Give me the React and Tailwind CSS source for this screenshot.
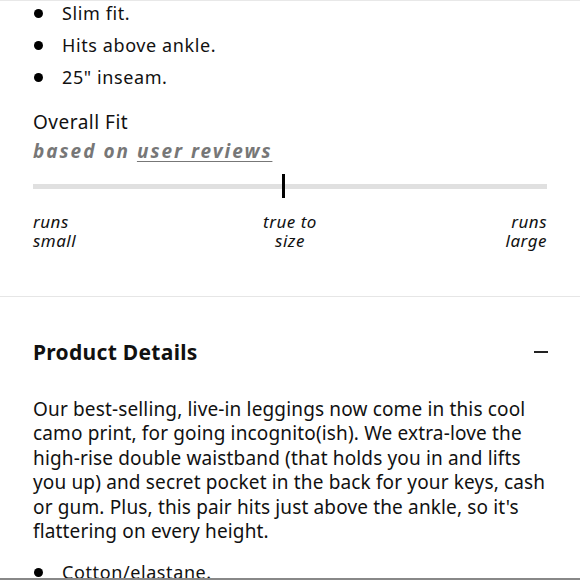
export default function App() {
  const font = { fontFamily: "'Noto Sans', 'Open Sans', sans-serif" };
  return (
    <div className="w-[580px] h-[580px] overflow-hidden bg-white text-[#111] border-t border-[#e8e8e8] relative" style={font}>
      <div className="px-[33px]">
        <ul className="-mt-[4px] text-[18px] leading-[32px] tracking-[0.6px]">
          {["Slim fit.", "Hits above ankle.", "25\" inseam."].map((t) => (
            <li key={t} className="flex items-center">
              <span className="w-[9px] h-[9px] rounded-full bg-black ml-[1px] mr-[19px]" />
              <span>{t}</span>
            </li>
          ))}
        </ul>
        <div className="mt-[15px] text-[19px] leading-[28px] tracking-[0.5px]">Overall Fit</div>
        <div className="mt-[1px] text-[19px] leading-[28px] font-bold italic text-[#777] tracking-[2px]">
          based on <span className="underline underline-offset-[3px] decoration-[1px]">user reviews</span>
        </div>
        <div className="relative mt-[9px] h-[24px] flex items-center">
          <div className="w-full h-[5px] bg-[#e0e0e0]" />
          <div className="absolute left-[249px] top-0 w-[3px] h-[24px] bg-black" />
        </div>
        <div className="mt-[14px] grid grid-cols-3 text-[17px] leading-[19px] italic tracking-[0.5px]">
          <div>runs<br />small</div>
          <div className="text-center">true to<br />size</div>
          <div className="text-right">runs<br />large</div>
        </div>
      </div>
      <div className="mt-[46px] border-t border-[#e6e6e6]" />
      <div className="px-[33px]">
        <div className="mt-[41px] flex items-center justify-between">
          <div className="text-[21px] leading-[28px] font-bold tracking-[0.3px]">Product Details</div>
          <div className="w-[14px] h-[2px] bg-[#222] mr-[-1px]" />
        </div>
        <p className="mt-[31px] text-[19px] leading-[24.4px] tracking-[0.15px]">
          Our best-selling, live-in leggings now come in this cool camo print, for going incognito(ish). We extra-love the high-rise double waistband (that holds you in and lifts you up) and secret pocket in the back for your keys, cash or gum. Plus, this pair hits just above the ankle, so it's flattering on every height.
        </p>
        <ul className="mt-[13px] text-[18px] leading-[32px] tracking-[0.6px]">
          <li className="flex items-center">
            <span className="w-[9px] h-[9px] rounded-full bg-black ml-[1px] mr-[19px]" />
            <span>Cotton/elastane.</span>
          </li>
        </ul>
      </div>
      <div className="absolute left-0 right-0 bottom-0 h-[2px] bg-[#888]" />
    </div>
  );
}
